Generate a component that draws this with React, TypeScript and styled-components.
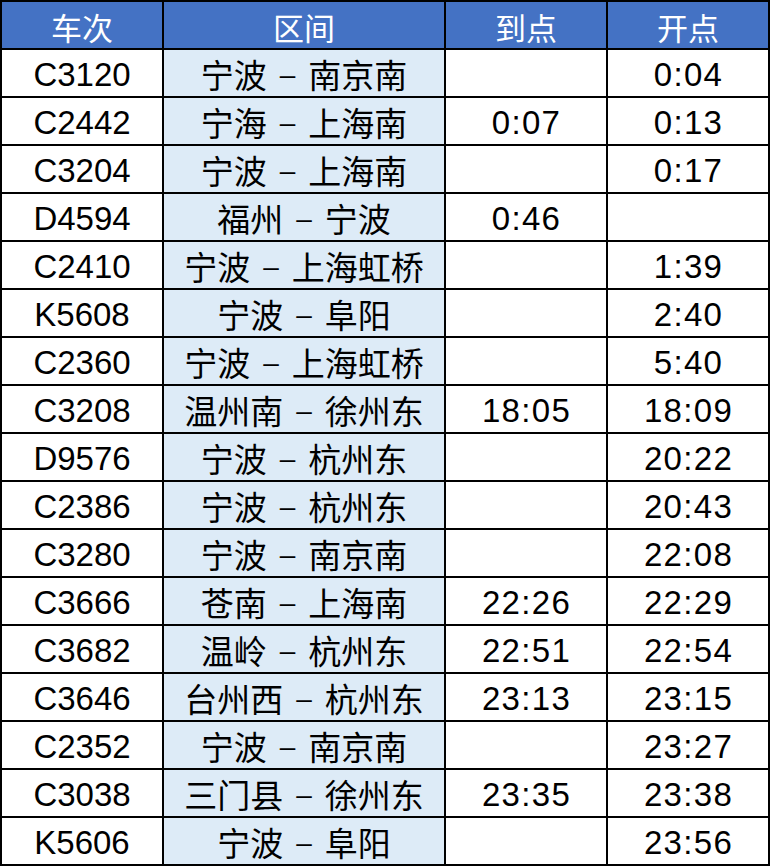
import React from "react";
import styled, { createGlobalStyle } from "styled-components";

const Global = createGlobalStyle`
  html, body { margin: 0; padding: 0; background: #ffffff; }
  body { font-family: "Liberation Sans", "Noto Sans CJK SC", sans-serif; }
`;

const Grid = styled.div`
  display: grid;
  grid-template-columns: 160px 280px 160px 160px;
  grid-auto-rows: 46px;
  gap: 2px;
  padding: 2px;
  width: 766px;
  background: #000000;
`;

const HeadCell = styled.div`
  display: flex;
  align-items: center;
  justify-content: center;
  background: #4472c4;
  color: #ffffff;
  font-family: "Noto Sans CJK SC", sans-serif;
  font-size: 31px;
  font-weight: 400;
  line-height: 1;
  padding-top: 2px;
`;

const Cell = styled.div<{ $route?: boolean; $time?: boolean }>`
  display: flex;
  align-items: center;
  justify-content: center;
  background: ${(p) => (p.$route ? "#ddebf7" : "#ffffff")};
  color: #000000;
  font-family: "Liberation Sans", "Noto Sans CJK SC", sans-serif;
  font-size: 33px;
  line-height: 1;
  padding-top: 3px;
  padding-left: ${(p) => (p.$time ? "1px" : "0")};
  letter-spacing: ${(p) => (p.$time ? "1.3px" : "0")};
  white-space: pre;
`;

const Place = styled.span`
  font-family: "Noto Sans CJK SC", sans-serif;
  font-size: 33px;
  line-height: 1;
`;

const Dash = styled.span`
  font-family: "Liberation Sans", sans-serif;
  font-size: 28px;
  margin: 0 13px;
`;

const rows: [string, string, string, string][] = [
  ["C3120", "宁波 – 南京南", "", "0:04"],
  ["C2442", "宁海 – 上海南", "0:07", "0:13"],
  ["C3204", "宁波 – 上海南", "", "0:17"],
  ["D4594", "福州 – 宁波", "0:46", ""],
  ["C2410", "宁波 – 上海虹桥", "", "1:39"],
  ["K5608", "宁波 – 阜阳", "", "2:40"],
  ["C2360", "宁波 – 上海虹桥", "", "5:40"],
  ["C3208", "温州南 – 徐州东", "18:05", "18:09"],
  ["D9576", "宁波 – 杭州东", "", "20:22"],
  ["C2386", "宁波 – 杭州东", "", "20:43"],
  ["C3280", "宁波 – 南京南", "", "22:08"],
  ["C3666", "苍南 – 上海南", "22:26", "22:29"],
  ["C3682", "温岭 – 杭州东", "22:51", "22:54"],
  ["C3646", "台州西 – 杭州东", "23:13", "23:15"],
  ["C2352", "宁波 – 南京南", "", "23:27"],
  ["C3038", "三门县 – 徐州东", "23:35", "23:38"],
  ["K5606", "宁波 – 阜阳", "", "23:56"],
];

function Route({ text }: { text: string }) {
  const [from, to] = text.split(" – ");
  return (
    <Cell $route>
      <Place>{from}</Place>
      <Dash>–</Dash>
      <Place>{to}</Place>
    </Cell>
  );
}

export default function App() {
  return (
    <>
      <Global />
      <Grid>
        <HeadCell>车次</HeadCell>
        <HeadCell>区间</HeadCell>
        <HeadCell>到点</HeadCell>
        <HeadCell>开点</HeadCell>
        {rows.map((r) => (
          <React.Fragment key={r[0]}>
            <Cell>{r[0]}</Cell>
            <Route text={r[1]} />
            <Cell $time>{r[2]}</Cell>
            <Cell $time>{r[3]}</Cell>
          </React.Fragment>
        ))}
      </Grid>
    </>
  );
}
